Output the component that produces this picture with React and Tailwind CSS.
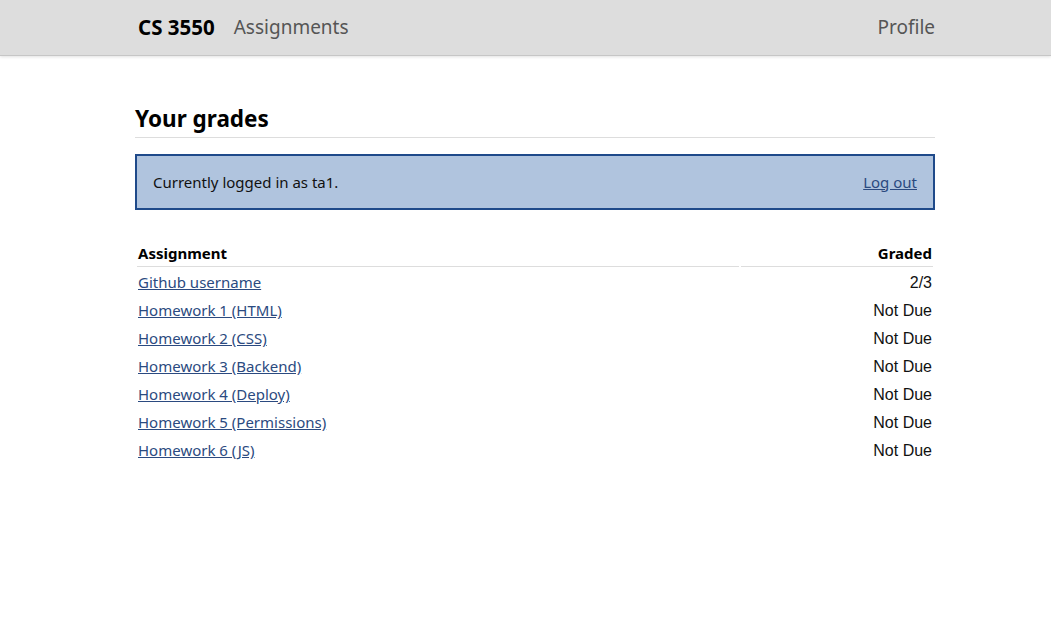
const rows = [
  { name: 'Github username', graded: '2/3' },
  { name: 'Homework 1 (HTML)', graded: 'Not Due' },
  { name: 'Homework 2 (CSS)', graded: 'Not Due' },
  { name: 'Homework 3 (Backend)', graded: 'Not Due' },
  { name: 'Homework 4 (Deploy)', graded: 'Not Due' },
  { name: 'Homework 5 (Permissions)', graded: 'Not Due' },
  { name: 'Homework 6 (JS)', graded: 'Not Due' },
];

export default function App() {
  return (
    <div className="min-h-screen bg-white text-[#111] font-['Noto_Sans',sans-serif]">
      <header className="h-[56px] bg-[#dddddd] border-b border-[#c6c6c6] shadow-[0_1px_3px_rgba(0,0,0,0.12)]">
        <nav className="ml-[135px] w-[800px] h-full flex items-center pl-[3px] pb-[1px]">
          <span className="font-bold text-black text-[20.5px]">CS 3550</span>
          <a href="#" className="ml-[19px] text-[#555] text-[19px]">Assignments</a>
          <a href="#" className="ml-auto text-[#555] text-[19px]">Profile</a>
        </nav>
      </header>

      <main className="ml-[135px] w-[800px] pt-[48px]">
        <h1 className="text-[22.5px] font-bold leading-[30px] pb-[3px] border-b border-[#dddddd] text-black">
          Your grades
        </h1>

        <div className="mt-[16px] h-[56px] flex items-center justify-between px-[16px] bg-[#b0c4de] border-2 border-[#1f4a8a] text-[15px]">
          <span>Currently logged in as ta1.</span>
          <a href="#" className="underline text-[#2b4a80]">Log out</a>
        </div>

        <table className="mt-[28px] w-full border-separate border-spacing-[2px] text-[15px] leading-[24px]">
          <thead>
            <tr>
              <th className="text-left font-bold p-[1px] border-b border-[#dddddd] text-black">Assignment</th>
              <th className="text-right font-bold p-[1px] border-b border-[#dddddd] text-black">Graded</th>
            </tr>
          </thead>
          <tbody>
            {rows.map((r) => (
              <tr key={r.name}>
                <td className="p-[1px]">
                  <a href="#" className="underline text-[#2b4a80]">{r.name}</a>
                </td>
                <td className="p-[1px] pt-[2px] pb-0 text-right font-['Liberation_Sans',sans-serif] text-[16px] text-[#111]">{r.graded}</td>
              </tr>
            ))}
          </tbody>
        </table>
      </main>
    </div>
  );
}
